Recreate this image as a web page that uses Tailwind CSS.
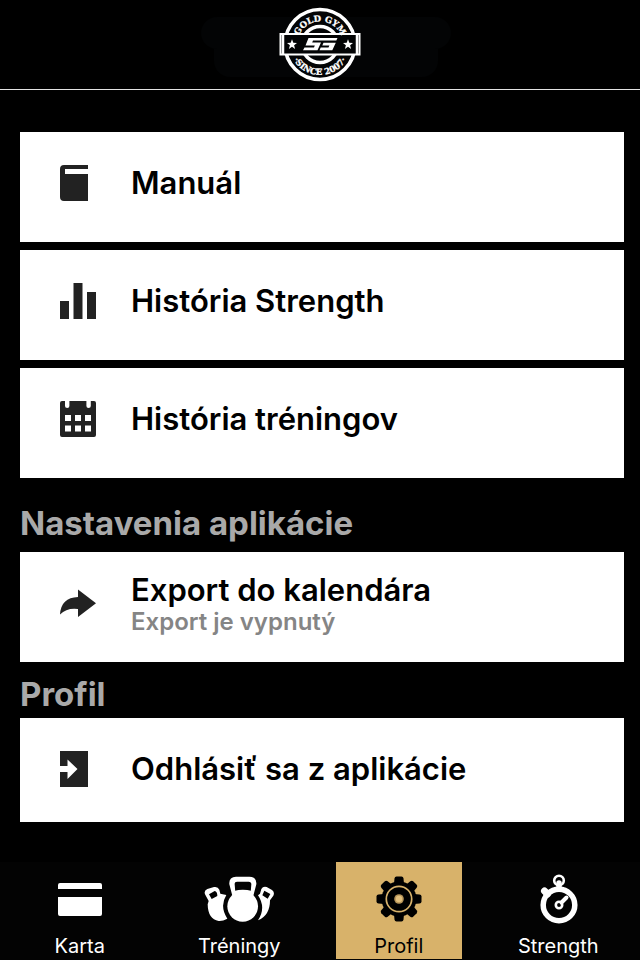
<!DOCTYPE html>
<html lang="sk">
  <head>
    <meta charset="utf-8" />
    <meta name="viewport" content="width=device-width,initial-scale=1.0" />
    <title>Gold Gym - Profil</title>
    <script src="https://cdn.jsdelivr.net/npm/@tailwindcss/browser@4"></script>
  </head>
  <body class="flex flex-col min-h-screen bg-black font-['Inter',sans-serif]">
    <header class="relative flex justify-center pt-[7px] pb-1 border-b border-[#e4e4e4]">
      <div class="absolute inset-x-0 top-[17px] flex flex-col items-center pl-3">
        <div class="w-[250px] h-8 rounded-full bg-[#030405]"></div>
        <div class="w-[224px] h-7 rounded-b-2xl bg-[#030405]"></div>
      </div>
      <svg class="relative w-[82px] h-[78px]" viewBox="0 0 82 78" role="img" aria-label="Gold Gym">
        <defs>
          <path id="arc-top" d="M18 37.5a23 23 0 0 1 46 0" />
          <path id="arc-bottom" d="M10.5 37.5a30.5 30.5 0 0 0 61 0" />
        </defs>
        <circle cx="41" cy="37.5" r="35" fill="#030405" stroke="#fff" stroke-width="3.6" />
        <circle cx="41" cy="37.5" r="18" fill="none" stroke="#fff" stroke-width="3.6" />
        <rect x="1.5" y="27" width="79" height="20.5" fill="#030405" stroke="#fff" stroke-width="2" />
        <path d="M4 27v20.5M78 27v20.5" stroke="#fff" stroke-width="2.500" />
        <g fill="#fff" stroke="#fff" stroke-width=".3" font-family="DejaVu Serif, serif" font-weight="bold" text-anchor="middle">
          <text font-size="8.500"><textPath href="#arc-top" startOffset="50%">GOLD GYM</textPath></text>
          <text font-size="8.500"><textPath href="#arc-bottom" startOffset="50%">·SINCE 2007·</textPath></text>
        </g>
        <g fill="#fff">
          <path id="star" d="M13 32.300l1.300 3.500 3.700.1-2.900 2.400 1 3.600-3.100-2.100-3.100 2.100 1-3.600-2.900-2.400 3.700-.1z" />
          <use href="#star" x="56" />
          <path d="M29.500 31H58.500L57.300 33.500H34L33.200 35.400H42L38.500 43.300H24L25.500 40.600H35L35.800 38.400H26.500z" />
          <path d="M44.500 35.800H56.800L53.300 43.300H40.500L41.700 40.600H49.500L50.400 38.400H43.300z" />
        </g>
      </svg>
    </header>

    <main class="flex-grow pl-5 pr-4 pt-[42px] pb-10">
      <ul class="space-y-2">
        <li>
          <button class="flex items-center w-full h-[110px] pl-10 pb-2 text-left bg-white">
            <svg class="w-9 h-9 mr-[35px] shrink-0" viewBox="0 0 36 36" fill="#222">
              <path d="M4 0h24v4H5v5h23v27H4q-4 0-4-4V4q0-4 4-4z" />
            </svg>
            <span class="text-[31px] leading-10 font-semibold">Manuál</span>
          </button>
        </li>
        <li>
          <button class="flex items-center w-full h-[110px] pl-10 pb-2 text-left bg-white">
            <svg class="w-9 h-9 mr-[35px] shrink-0" viewBox="0 0 36 36" fill="#222">
              <path d="M0 18h9v18H0zM13.500 0h9v36h-9zM27 9h9v27h-9z" />
            </svg>
            <span class="text-[31px] leading-10 font-semibold">História Strength</span>
          </button>
        </li>
        <li>
          <button class="flex items-center w-full h-[110px] pl-10 pb-2 text-left bg-white">
            <svg class="w-9 h-9 mr-[35px] shrink-0" viewBox="0 0 36 36" fill="#222" fill-rule="evenodd">
              <path d="M2 0h3v5q0 2 2.200 2t2.200-2V0h17v5q0 2 2.200 2t2.200-2V0H34q2 0 2 2v32q0 2-2 2H2q-2 0-2-2V2q0-2 2-2zM5 14v6h6v-6zM15 14v6h6v-6zM25 14v6h6v-6zM5 24.500v6h6v-6zM15 24.500v6h6v-6zM25 24.500v6h6v-6z" />
            </svg>
            <span class="text-[31px] leading-10 font-semibold">História tréningov</span>
          </button>
        </li>
      </ul>

      <h2 class="mt-[25px] mb-[9px] text-[33px] leading-10 font-bold text-[#a9a9a9]">Nastavenia aplikácie</h2>
      <button class="flex items-center w-full h-[110px] pl-10 pb-2 text-left bg-white">
        <svg class="w-9 h-9 mr-[35px] shrink-0" viewBox="0 0 36 36" fill="#222">
          <path d="M18 4.500 36 18.300 18 32v-8Q7 22.500 0 29.500 1 12.500 18 12z" />
        </svg>
        <span class="pb-0.5">
          <span class="block text-[31px] leading-10 font-semibold">Export do kalendára</span>
          <span class="block text-2xl leading-6 font-semibold text-[#858585]">Export je vypnutý</span>
        </span>
      </button>

      <h2 class="mt-3 mb-1 text-[33px] leading-10 font-bold text-[#a9a9a9]">Profil</h2>
      <button class="flex items-center w-full h-[104px] pl-10 pb-0.5 text-left bg-white">
        <svg class="w-9 h-9 mr-[35px] shrink-0" viewBox="0 0 36 36" fill="#222">
          <path d="M0 0h28v36H0V21h7.500v7L17.500 18 7.500 8.500V15H0z" />
        </svg>
        <span class="text-[31px] leading-10 font-semibold">Odhlásiť sa z aplikácie</span>
      </button>
    </main>

    <nav class="grid grid-cols-4 pb-px pr-0.5 text-xl leading-6 text-white bg-[#030303]">
      <a href="#karta" class="flex flex-col items-center w-[126px] h-[97px] mx-auto pt-3">
        <svg class="w-[70px] h-[50px] mb-2.5" viewBox="0 0 70 50" fill="#fff">
          <path d="M15 9h40q2 0 2 2v4H13v-4q0-2 2-2zM13 23h44v17q0 2-2 2H15q-2 0-2-2z" />
        </svg>
        Karta
      </a>
      <a href="#treningy" class="flex flex-col items-center w-[126px] h-[97px] mx-auto pt-3">
        <svg class="w-[70px] h-[50px] mb-2.5" viewBox="-2 -5 210 150" fill="#fff" fill-rule="evenodd">
          <path d="M9 86 12 76 1 56Q-3 45 8 40L28 34Q40 32 44 42L47 54 65 58Q44 92 68 129 54 137 42 136 10 131 9 86zM13 56 21 70 38 61Q38 47 30 46z" />
          <path d="M160 59 166 54 170 40Q175 31 186 34L202 43Q211 49 206 60L196 74Q196 120 160 134 185 96 160 59zM179 45 173 59 189 69 197 55z" />
          <circle cx="114" cy="92" r="46" />
          <path d="M84 64 74 26Q72 4 94 3H134Q157 4 155 26L145 64 138 50 140 26Q140 18 132 18H97Q89 18 90 26L92 50z" />
          <path d="M88 46Q114 38 142 46V62H88z" />
        </svg>
        Tréningy
      </a>
      <a href="#profil" aria-current="page" class="flex flex-col items-center w-[126px] h-[97px] mx-auto pt-3 text-black bg-[#d8b26a]">
        <svg class="w-[70px] h-[50px] mb-2.5" viewBox="-35 -25 70 50">
          <circle r="17.500" />
          <g id="teeth">
            <path id="tooth" d="M-5-15-4.500-20.500q.2-2 2-2h5q1.800 0 2 2L5-15v30l-.5 5.500q-.2 2-2 2h-5q-1.800 0-2-2L-5 15z" />
            <use href="#tooth" transform="rotate(90)" />
          </g>
          <use href="#teeth" transform="rotate(45)" />
          <circle r="12.700" fill="none" stroke="#d8b26a" stroke-width="1.700" />
          <circle r="4.800" fill="#b8965a" />
          <circle r="3.200" fill="#e3c07c" />
        </svg>
        Profil
      </a>
      <a href="#strength" class="flex flex-col items-center w-[126px] h-[97px] mx-auto pt-3">
        <svg class="w-[70px] h-[50px] mb-2.5" viewBox="-1 0 70 50" fill="none" stroke="#fff">
          <circle cx="35" cy="31" r="15.800" stroke-width="5.500" />
          <circle cx="35" cy="6.500" r="4.800" stroke-width="2.600" />
          <path d="M35 9v6" stroke-width="5.500" stroke-linecap="round" />
          <path d="m20.500 17 3 3" stroke-width="7" stroke-linecap="round" />
          <circle cx="35" cy="31" r="3.200" stroke-width="2.600" />
          <path d="m37.500 28.500 5-5" stroke-width="4" stroke-linecap="round" />
        </svg>
        Strength
      </a>
    </nav>
  </body>
</html>
